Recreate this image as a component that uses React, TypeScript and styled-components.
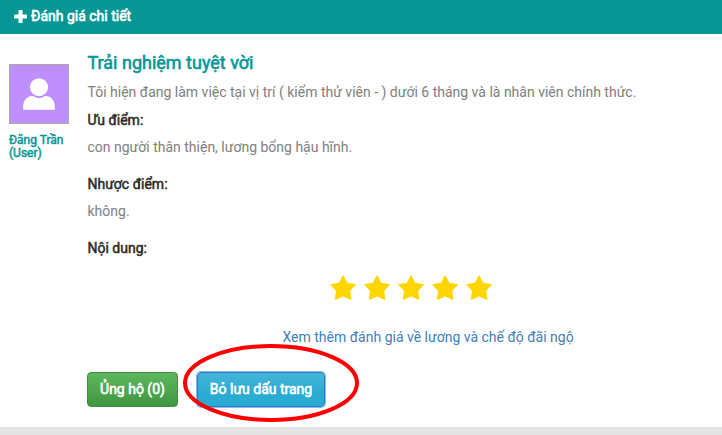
import React from "react";
import styled, { createGlobalStyle } from "styled-components";

const GlobalStyle = createGlobalStyle`
  * { box-sizing: border-box; }
  body {
    margin: 0;
    overflow: hidden;
    background: #fff;
    font: 400 14px/20px Roboto, "Liberation Sans", sans-serif;
    color: #808080;
  }
`;

const Page = styled.div`
  display: flex;
  flex-direction: column;
  width: 722px;
  height: 435px;
  overflow: hidden;
`;

const Header = styled.header`
  display: flex;
  align-items: center;
  gap: 4px;
  height: 34px;
  padding: 0 14px 2px;
  background: #069795;
  color: #fff;
  -webkit-text-stroke: 0.6px currentColor;
  svg { display: block; }
`;

const Body = styled.main`
  display: flex;
  flex: 1;
  min-height: 0;
`;

const Author = styled.aside`
  width: 87px;
  flex: none;
  padding: 30px 0 0 9px;
`;

const Avatar = styled.div`
  width: 60px;
  height: 60px;
  border: 1px solid #aaa;
  background: #bf8fff;
  svg { display: block; }
`;

const AuthorName = styled.div`
  margin-top: 10px;
  font-size: 12px;
  line-height: 13px;
  color: #069795;
  -webkit-text-stroke: 0.5px currentColor;
`;

const Review = styled.section`
  flex: 1;
  padding: 17px 0 0 0.5px;
`;

const Title = styled.h1`
  margin: 0 0 7px;
  font-size: 18px;
  font-weight: 400;
  line-height: 24px;
  color: #069795;
  -webkit-text-stroke: 0.6px currentColor;
`;

const Label = styled.h2`
  margin: 0;
  padding-top: 8px;
  font-size: 14px;
  font-weight: 400;
  line-height: 20px;
  color: #2b2b2b;
  -webkit-text-stroke: 0.5px currentColor;
`;

const Text = styled.p<{ $spaced?: boolean }>`
  margin: ${(p) => (p.$spaced ? "7px 0 9px" : "0")};
`;

const Stars = styled.div`
  display: flex;
  gap: 8px;
  margin: 17px 0 0 242.5px;
  svg { display: block; }
`;

const MoreLink = styled.a`
  display: block;
  margin: 26px 0 0 195px;
  color: #3f80ba;
`;

const Actions = styled.div`
  display: flex;
  gap: 19px;
  margin: 25px 0 0 -0.5px;
`;

const Button = styled.button<{ $kind: "support" | "bookmark" }>`
  display: block;
  height: 35px;
  width: ${(p) => (p.$kind === "support" ? 91 : 128)}px;
  padding: 0 0 2px;
  border: 1px solid ${(p) => (p.$kind === "support" ? "#3e8f3e" : "#2c78c2")};
  border-radius: 4px;
  background: ${(p) =>
    p.$kind === "support"
      ? "linear-gradient(#5cb85c, #419641)"
      : "linear-gradient(#46b4da, #2aabd2 60%)"};
  box-shadow: ${(p) => (p.$kind === "bookmark" ? "0 0 0 1px #8bb8ef" : "none")};
  color: #fff;
  font: inherit;
  white-space: nowrap;
  -webkit-text-stroke: 0.6px currentColor;
`;

const BookmarkArea = styled.div`
  position: relative;
`;

const Highlight = styled.svg`
  position: absolute;
  left: -14px;
  top: -29px;
  pointer-events: none;
`;

const Footer = styled.footer`
  height: 8px;
  background: #e4e4e4;
`;

const Star = () => (
  <svg width="26" height="26" viewBox="0 0 26 26" fill="#ffd600" stroke="#ffd600" strokeWidth="1.6" strokeLinejoin="round">
    <path d="M13.100 1.300 L16.900 8.500 L25 9.800 L19.300 15.600 L20.600 24 L13.100 20.500 L5.600 24 L6.900 15.600 L1.200 9.800 L9.300 8.500Z" />
  </svg>
);

export default function App() {
  return (
    <>
      <GlobalStyle />
      <Page>
        <Header>
          <svg width="13" height="13" viewBox="0 0 13 13" fill="#fff">
            <path d="M5 0h3a.5.5 0 0 1 .5.5v4h4a.5.5 0 0 1 .5.5v3a.5.5 0 0 1-.5.5h-4v4a.5.5 0 0 1-.5.5H5a.5.5 0 0 1-.5-.5v-4h-4A.5.5 0 0 1 0 8V5a.5.5 0 0 1 .5-.5h4v-4A.5.5 0 0 1 5 0z" />
          </svg>
          <span>Đánh giá chi tiết</span>
        </Header>
        <Body>
          <Author>
            <Avatar>
              <svg width="58" height="58" viewBox="0 0 58 58" fill="#fff">
                <circle cx="29" cy="22.200" r="9" />
                <path d="M13.200 44.700v-3.200c0-6 4-10.500 9-10.500 2 0 3 2 6.800 2s4.800-2 6.800-2c5 0 9 4.500 9 10.500v3.200z" />
              </svg>
            </Avatar>
            <AuthorName>Đăng Trần<br />(User)</AuthorName>
          </Author>
          <Review>
            <Title>Trải nghiệm tuyệt vời</Title>
            <Text>Tôi hiện đang làm việc tại vị trí ( kiểm thử viên - ) dưới 6 tháng và là nhân viên chính thức.</Text>
            <Label>Ưu điểm:</Label>
            <Text $spaced>con người thân thiện, lương bổng hậu hĩnh.</Text>
            <Label>Nhược điểm:</Label>
            <Text $spaced>không.</Text>
            <Label>Nội dung:</Label>
            <Stars>
              {[1, 2, 3, 4, 5].map((n) => <Star key={n} />)}
            </Stars>
            <MoreLink>Xem thêm đánh giá về lương và chế độ đãi ngộ</MoreLink>
            <Actions>
              <Button $kind="support">Ủng hộ (0)</Button>
              <BookmarkArea>
                <Button $kind="bookmark">Bỏ lưu dấu trang</Button>
                <Highlight width="176" height="80" viewBox="0 0 176 80" fill="none">
                  <ellipse cx="88" cy="40" rx="86" ry="37" stroke="#f00" strokeWidth="4" />
                </Highlight>
              </BookmarkArea>
            </Actions>
          </Review>
        </Body>
        <Footer />
      </Page>
    </>
  );
}
